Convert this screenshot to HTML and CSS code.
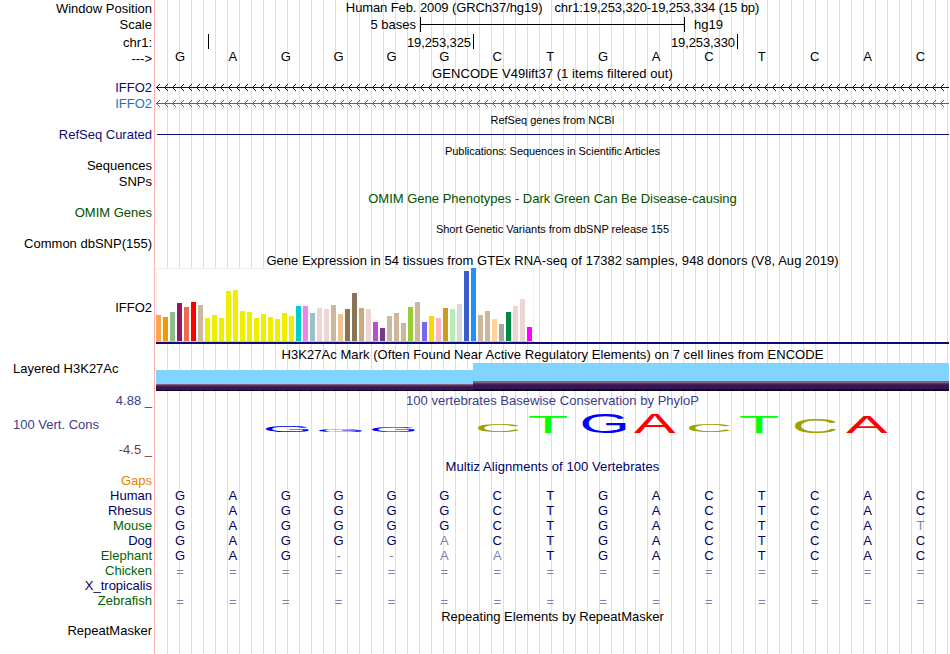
FILE: index.html
```
<!DOCTYPE html>
<html>
<head>
    <title>Human chr1:19,253,320-19,253,334 Genome Browser</title>
    <meta charset="UTF-8">
    <link rel="stylesheet" href="styles.css">
</head>
<body>
<div class="browser">
    <div class="row h16">
        <div class="label window-label">Window Position</div>
        <div class="title window-title"><span>Human Feb. 2009 (GRCh37/hg19)</span><span>chr1:19,253,320-19,253,334 (15 bp)</span></div>
    </div>
    <div class="row h19">
        <div class="label low">Scale</div>
        <div class="scale"><span class="bases-text">5 bases</span><span class="ruler"></span><span>hg19</span></div>
    </div>
    <div class="row h15">
        <div class="label">chr1:</div>
        <div class="positions">
            <span></span>
            <span>19,253,325</span>
            <span>19,253,330</span>
        </div>
    </div>
    <div class="row h16">
        <div class="label arrow-label">---&gt;</div>
        <div class="bases ruler-bases" data-seq="GAGGGGCTGACTCAC"></div>
    </div>

    <div class="row h14"><div class="title gencode">GENCODE V49lift37 (1 items filtered out)</div></div>
    <div class="row h15 navy">
        <div class="label">IFFO2</div>
        <svg class="intron" width="793" height="15"></svg>
    </div>
    <div class="row h16 blue">
        <div class="label lower">IFFO2</div>
        <svg class="intron" width="793" height="16"></svg>
    </div>
    <div class="row h17"><div class="title small">RefSeq genes from NCBI</div></div>
    <div class="row h13 navy">
        <div class="label">RefSeq Curated</div>
        <div class="gene-line"></div>
    </div>
    <div class="row h17"><div class="title small pubs">Publications: Sequences in Scientific Articles</div></div>
    <div class="row h15"><div class="label">Sequences</div></div>
    <div class="row h16"><div class="label lower">SNPs</div></div>
    <div class="row h16 green"><div class="title omim">OMIM Gene Phenotypes - Dark Green Can Be Disease-causing</div></div>
    <div class="row h15 green"><div class="label">OMIM Genes</div></div>
    <div class="row h17"><div class="title small dbsnp">Short Genetic Variants from dbSNP release 155</div></div>
    <div class="row h14"><div class="label">Common dbSNP(155)</div></div>

    <div class="row h17"><div class="title gtex-title">Gene Expression in 54 tissues from GTEx RNA-seq of 17382 samples, 948 donors (V8, Aug 2019)</div></div>
    <div class="row h76">
        <div class="label gtex-label">IFFO2</div>
        <div class="gtex"><div class="gtex-bars" id="gtexBars"></div></div>
    </div>

    <div class="row h19"><div class="title h3k-title">H3K27Ac Mark (Often Found Near Active Regulatory Elements) on 7 cell lines from ENCODE</div></div>
    <div class="row h28">
        <div class="label left h3k-label">Layered H3K27Ac</div>
        <div class="h3k"><div class="signal low-signal"></div><div class="signal high-signal"></div></div>
    </div>

    <div class="row h17 phylo">
        <div class="label">4.88 _</div>
        <div class="title phylo-title">100 vertebrates Basewise Conservation by PhyloP</div>
    </div>
    <div class="row h50 phylo">
        <div class="cons-label">
            <div>100 Vert. Cons</div>
            <div class="min">-4.5 _</div>
        </div>
        <svg class="logo" id="logo" width="793" height="50"></svg>
    </div>

    <div class="row h15 multiz"><div class="title multiz-title">Multiz Alignments of 100 Vertebrates</div></div>
    <div class="row h15 gaps"><div class="label">Gaps</div></div>
    <div class="row h15 multiz"><div class="label">Human</div><div class="bases" data-seq="GAGGGGCTGACTCAC"></div></div>
    <div class="row h15 multiz"><div class="label">Rhesus</div><div class="bases" data-seq="GAGGGGCTGACTCAC"></div></div>
    <div class="row h15 multiz"><div class="label alt">Mouse</div><div class="bases" data-seq="GAGGGGCTGACTCAt"></div></div>
    <div class="row h15 multiz"><div class="label">Dog</div><div class="bases" data-seq="GAGGGaCTGACTCAC"></div></div>
    <div class="row h15 multiz"><div class="label alt">Elephant</div><div class="bases" data-seq="GAG--aaTGACTCAC"></div></div>
    <div class="row h15 multiz"><div class="label alt">Chicken</div><div class="bases unaligned" data-seq="==============="></div></div>
    <div class="row h15 multiz"><div class="label">X_tropicalis</div></div>
    <div class="row h15 multiz"><div class="label alt">Zebrafish</div><div class="bases unaligned" data-seq="==============="></div></div>

    <div class="row h15"><div class="title repeat-title">Repeating Elements by RepeatMasker</div></div>
    <div class="row h15"><div class="label">RepeatMasker</div></div>
</div>

<script src="tracks.js"></script>
</body>
</html>
```
FILE: styles.css
```
body {
    margin: 0;
    background: #fff;
    font-family: "Liberation Sans", Arial, Helvetica, sans-serif;
    font-size: 13px;
    color: #000;
}
.browser {
    width: 949px;
    height: 654px;
    overflow: hidden;
    /* red divider, then a guideline every 12px */
    background:
        linear-gradient(#ffb4b4, #ffb4b4) 154px 0 / 1px 100% no-repeat,
        repeating-linear-gradient(to right, transparent 0 11px, #dcdcf8 11px 12px) 156px 0 no-repeat;
}
.row {
    display: grid;
    grid-template-columns: 152px 793px;
    column-gap: 4px;
    white-space: pre;
}
.h13 { height: 13px; line-height: 13px; }
.h14 { height: 14px; line-height: 14px; }
.h15 { height: 15px; line-height: 15px; }
.h16 { height: 16px; line-height: 16px; }
.h17 { height: 17px; line-height: 19px; }
.h19 { height: 19px; line-height: 21px; }
.h28 { height: 28px; }
.h50 { height: 50px; }
.h76 { height: 76px; }
.navy { color: #0c0c78; }
.blue { color: #1b75bb; }
.green { color: #005000; }
.phylo { color: #3c3c8c; }
.multiz { color: #000064; }
.gaps { color: #e68200; }
.alt { color: #006400; }

.label { text-align: right; }
.label.left {
    text-align: left;
    padding-left: 13px;
}
.label.low { line-height: 18px; }
.label.lower { line-height: 18px; }
.window-label { line-height: 17px; }
.arrow-label { line-height: 18px; }
.title {
    grid-column: 2;
    display: flex;
    justify-content: center;
}
.small { font-size: 11px; }
.window-title {
    gap: 12px;
    line-height: 15px;
    letter-spacing: -0.1px;
}
.gencode {
    line-height: 16px;
    letter-spacing: 0.06px;
}
.pubs {
    line-height: 21px;
    letter-spacing: -0.06px;
}
.omim { line-height: 20px; }
.gtex-title { letter-spacing: 0.055px; }
.h3k-title { letter-spacing: 0.05px; }
.phylo-title { letter-spacing: 0.02px; }
.multiz-title { letter-spacing: 0.08px; }

/* scale and positions */
.scale {
    display: flex;
    line-height: 17px;
}
.bases-text {
    width: 260px;
    text-align: right;
}
.ruler {
    width: 263px;
    height: 15px;
    margin: 1px 9px 0 4px;
    border-left: 1px solid #000;
    border-right: 1px solid #000;
    background: linear-gradient(#000, #000) 0 7px / 100% 1px no-repeat;
}
.positions {
    display: grid;
    grid-template-columns: 53px 265px 264px;
    text-align: right;
    line-height: 16px;
    letter-spacing: -0.1px;
}
.positions span {
    height: 15px;
    margin-top: -1px;
    padding-right: 2px;
    padding-top: 1px;
    box-sizing: border-box;
    border-right: 1px solid #000;
}
.bases {
    display: grid;
    grid-template-columns: repeat(15, 52.9px);
    margin-left: -2px;
    text-align: center;
}
.bases span { margin-left: -1px; }
.ruler-bases { line-height: 14px; }
.bases.unaligned { line-height: 17px; }
.bases .mismatch { color: #8080b4; }

/* genes */
.intron {
    display: block;
    shape-rendering: crispEdges;
}
.gene-line {
    height: 1px;
    margin: 6px 0 0 1px;
    background: #0c0c78;
}

/* expression */
.gtex-label { line-height: 79px; }
.gtex {
    border-bottom: 2px solid #0c0c78;
    height: 74px;
}
.gtex-bars {
    display: flex;
    align-items: flex-end;
    gap: 2px;
    width: 378px;
    height: 74px;
    box-sizing: border-box;
    background: #fff;
    border-bottom: 1px solid #c8c8c8;
    box-shadow: inset -1px 1px #f0f0f0, inset 1px 0 #f0f0f0;
}
.gtex-bars div { width: 5px; }

/* histone mark */
.h3k-label { line-height: 12px; }
.h3k {
    display: flex;
    align-items: flex-end;
}
.low-signal {
    width: 317px;
    height: 21px;
    background: linear-gradient(#80d4ff 14px, #7b647d 14px 15px, #742661 15px 16px, #50185a 16px 17px, #301850 17px 20px, #150530 20px);
}
.high-signal {
    width: 476px;
    height: 28px;
    background: linear-gradient(#80d4ff 18px, #7b647d 18px 20px, #742661 20px 21px, #50185a 21px 22px, #301850 22px 26px, #150530 26px);
}

/* conservation */
.cons-label {
    display: flex;
    flex-direction: column;
    justify-content: space-between;
    padding: 9px 0 0 13px;
    line-height: 16px;
}
.cons-label .min {
    color: #783c3c;
    text-align: right;
}
.logo {
    display: block;
    font-size: 20px;
}
.multiz .title, .repeat-title { line-height: 17px; }
```
FILE: tracks.js
```
const NS = "http://www.w3.org/2000/svg";

function svgEl(name, attrs, parent) {
    const el = document.createElementNS(NS, name);
    for (const key in attrs) el.setAttribute(key, attrs[key]);
    parent.appendChild(el);
    return el;
}

// lower case, gap and unaligned bases are drawn lighter
document.querySelectorAll(".bases").forEach(row => {
    for (const ch of row.dataset.seq) {
        const span = document.createElement("span");
        span.textContent = ch.toUpperCase();
        if (/[a-z=-]/.test(ch)) span.className = "mismatch";
        row.appendChild(span);
    }
});

// intron line with strand arrows
document.querySelectorAll(".intron").forEach(svg => {
    const y = svg.getAttribute("height") === "15" ? 7 : 8;
    let d = "M0 " + y + "h793v1h-793z";
    for (let x = 1; x < 793; x += 8) {
        for (let i = 1; i <= 3; i++) {
            d += `M${x + i - 1} ${y - i}h1v1h-1zM${x + i - 1} ${y + i}h1v1h-1z`;
        }
    }
    svgEl("path", { d: d, fill: "currentColor" }, svg);
});

// GTEx tissues: colour, bar height
const tissues = [
    ["#ffa54f", 26], ["#ee9a00", 24], ["#8fbc8f", 29], ["#8b1c62", 38], ["#ee6a50", 34], ["#ff0000", 39],
    ["#cdb79e", 36], ["#eeee00", 23], ["#eeee00", 26], ["#eeee00", 23], ["#eeee00", 50], ["#eeee00", 51],
    ["#eeee00", 30], ["#eeee00", 29], ["#eeee00", 23], ["#eeee00", 27], ["#eeee00", 24], ["#eeee00", 22],
    ["#eeee00", 28], ["#eeee00", 25], ["#00cdcd", 35], ["#ee82ee", 35], ["#9ac0cd", 28], ["#eed5d2", 33],
    ["#eed5d2", 32], ["#cdb79e", 36], ["#eec591", 27], ["#8b7355", 32], ["#8b7355", 48], ["#cdaa7d", 33],
    ["#eed5d2", 32], ["#b452cd", 19], ["#7a378b", 13], ["#cdb79e", 25], ["#cdb79e", 28], ["#cdb79e", 18],
    ["#9acd32", 34], ["#cdb79e", 39], ["#7a67ee", 19], ["#ffd700", 25], ["#ffb6c1", 23], ["#cd9b1d", 33],
    ["#b4eeb4", 32], ["#d9d9d9", 37], ["#3a5fcd", 70], ["#1e90ff", 73], ["#cdb79e", 26], ["#cdb79e", 30],
    ["#ffd39b", 22], ["#a6a6a6", 17], ["#008b45", 29], ["#eed5d2", 35], ["#eed5d2", 42], ["#ff00ff", 14]
];
const bars = document.getElementById("gtexBars");
tissues.forEach(([color, height]) => {
    const bar = document.createElement("div");
    bar.style.background = color;
    bar.style.height = height + "px";
    bars.appendChild(bar);
});

// ink box of each base at 20px: left, width, cap height, depth below baseline
const ink = {
    A: [0.03, 13.3, 13.76, 0],
    C: [1.0, 12.6, 14.16, 0.2],
    G: [1.0, 13.3, 14.16, 0.2],
    T: [0.41, 11.4, 13.76, 0]
};
const inkColor = { A: "#ff0000", C: "#a0a000", G: "#0000ff", T: "#00ff00" };

// base, left, width, top, bottom
const logo = [
    ["G", 110, 43, 17.2, 24], ["G", 163, 43, 21, 24], ["G", 216, 43, 18.4, 24],
    ["C", 322, 41, 16.2, 24], ["T", 373, 38, 9, 25], ["G", 426.5, 43.5, 5, 25],
    ["A", 478, 41.5, 6, 25], ["C", 533, 41, 16.2, 24], ["T", 584, 38, 9, 25],
    ["C", 639, 41, 11, 25], ["A", 690, 41.5, 8, 25]
];
logo.forEach(([ch, x, w, top, bottom]) => {
    const [left, inkW, cap, depth] = ink[ch];
    const sx = w / inkW;
    const sy = (bottom - top) / (cap + depth);
    const text = svgEl("text", {
        transform: `translate(${x - left * sx} ${bottom - depth * sy}) scale(${sx} ${sy})`,
        fill: inkColor[ch]
    }, document.getElementById("logo"));
    text.textContent = ch;
});
```
